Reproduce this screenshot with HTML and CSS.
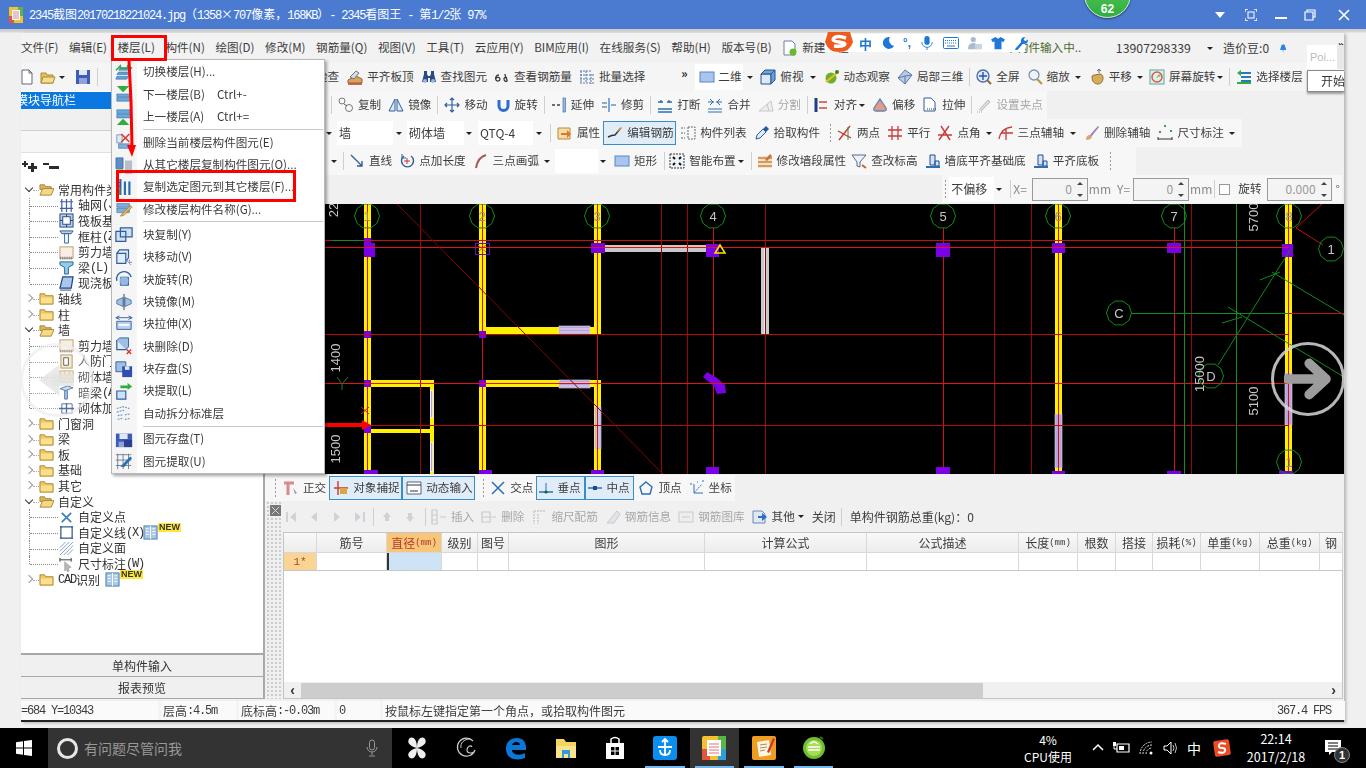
FILE: index.html
```html
<!DOCTYPE html>
<html lang="zh-CN">
<head>
<meta charset="utf-8">
<title>2345看图王</title>
<link rel="stylesheet" href="styles.css">
</head>
<body>
<svg class="defs" aria-hidden="true">
<defs>
<symbol id="doc" viewBox="0 0 16 16"><path d="M3 1h7l3 3v11H3z" fill="#fff" stroke="#667"/><path d="M10 1v3h3" fill="none" stroke="#667"/></symbol>
<symbol id="docg" viewBox="0 0 16 16"><path d="M2 1h8l3 3v11H2z" fill="#fff" stroke="#6a7fa8"/><circle cx="11" cy="12" r="3.5" fill="#6ab82c"/></symbol>
<symbol id="open" viewBox="0 0 16 16"><path d="M1 4h5l1 2h6v8H1z" fill="#e8c05a" stroke="#a98a3a"/><path d="M3 8h12l-2 6H1z" fill="#f6dc8c" stroke="#a98a3a"/></symbol>
<symbol id="save" viewBox="0 0 16 16"><path d="M1 1h14v14H1z" fill="#3d5cb8"/><path d="M4 1h8v5H4z" fill="#dfe6f5"/><path d="M4 9h8v6H4z" fill="#8fa3d8"/></symbol>
<symbol id="flat" viewBox="0 0 16 16"><path d="M1 11l8-4 6 3v4H1z" fill="#d9a55b" stroke="#8a6a34"/><path d="M3 8l6-6 3 2-5 6z" fill="#d8dde5" stroke="#678"/><path d="M1 15h14" stroke="#c33" stroke-width="1.5"/></symbol>
<symbol id="bino" viewBox="0 0 16 16"><path d="M3 2h3v3l1 2h2l1-2V2h3v3l2 8H9V9H7v4H1l2-8z" fill="#2a4a84"/><circle cx="4" cy="12" r="2" fill="#9fb7e0"/><circle cx="12" cy="12" r="2" fill="#9fb7e0"/></symbol>
<symbol id="look" viewBox="0 0 16 16"><path d="M5 6C2 6 1 9 2 11s4 1 4-1-3-2-4-1M11 5c0 4 3 6 2 7s-3 0-3-2 2-2 3-1" fill="none" stroke="#333" stroke-width="1.3"/></symbol>
<symbol id="batch" viewBox="0 0 16 16"><path d="M1 2h11M1 6h14M1 10h14M1 14h14M2 2v12M7 2v12M12 5v10" stroke="#5577aa" stroke-dasharray="2 1" fill="none"/></symbol>
<symbol id="r2d" viewBox="0 0 16 16"><rect x="1" y="3" width="14" height="10" fill="#a9c5ef" stroke="#5a85c6"/></symbol>
<symbol id="cube" viewBox="0 0 16 16"><path d="M1 5h10v10H1z" fill="#dbe9f8" stroke="#26548c"/><path d="M1 5l4-4h10l-4 4zM11 5l4-4v10l-4 4z" fill="#6ea2da" stroke="#26548c"/></symbol>
<symbol id="orbit" viewBox="0 0 16 16"><circle cx="7" cy="9" r="5.5" fill="#6fae2e"/><path d="M2 13L14 3" stroke="#e6c028" stroke-width="2"/><circle cx="13" cy="3" r="2" fill="#3f7d1d"/></symbol>
<symbol id="p3d" viewBox="0 0 16 16"><path d="M8 1l7 5-7 9-7-6z" fill="#b9cbe4" stroke="#5a7ba6"/><path d="M1 9l7-2 7-1M8 7v8" stroke="#5a7ba6" fill="none"/></symbol>
<symbol id="zf" viewBox="0 0 16 16"><circle cx="7" cy="7" r="6" fill="#dfeafa" stroke="#4c6ea6" stroke-width="1.4"/><path d="M7 3v8M3 7h8" stroke="#2456a6" stroke-width="1.4"/><path d="M11 11l4 4" stroke="#8a6a3a" stroke-width="2"/></symbol>
<symbol id="zm" viewBox="0 0 16 16"><circle cx="7" cy="6" r="5" fill="#eef3fa" stroke="#7c92b4" stroke-width="1.3"/><path d="M10 10l5 5" stroke="#b79a3a" stroke-width="2.2"/></symbol>
<symbol id="pan" viewBox="0 0 16 16"><path d="M3 8c0-2 2-2 3-2l5-1c2 0 3 2 3 4s-1 6-5 6-6-3-6-7z" fill="#d9ad55" stroke="#8a6d2f"/><path d="M10 4V1M8 2l2-2 2 2" stroke="#667" fill="none"/></symbol>
<symbol id="rs" viewBox="0 0 16 16"><rect x="1" y="1" width="14" height="14" fill="#dff0ea" stroke="#5aa"/><circle cx="8" cy="8" r="5" fill="none" stroke="#d95a4a" stroke-width="1.5"/><path d="M7 9l3-4 2 2z" fill="#8bbf3a"/></symbol>
<symbol id="lay" viewBox="0 0 16 16"><path d="M5 4h10M5 8h10M5 12h10" stroke="#2a7ab8" stroke-width="2"/><path d="M5 1L1 4l4 3z" fill="#2fae3c"/><path d="M1 14h14" stroke="#2fae3c" stroke-width="2"/></symbol>
<symbol id="dup" viewBox="0 0 16 16"><circle cx="4" cy="4" r="3" fill="none" stroke="#777"/><circle cx="11" cy="11" r="3.5" fill="none" stroke="#777"/><path d="M6 7l3 2" stroke="#2a6fb0"/></symbol>
<symbol id="mir" viewBox="0 0 16 16"><path d="M7 2v12H1zM9 2v12h6z" fill="#dfe9f6" stroke="#2f5f9e"/></symbol>
<symbol id="mov" viewBox="0 0 16 16"><path d="M8 1v14M1 8h14M6 3l2-2 2 2M6 13l2 2 2-2M3 6L1 8l2 2M13 6l2 2-2 2" stroke="#2f5f9e" fill="none" stroke-width="1.2"/></symbol>
<symbol id="rot" viewBox="0 0 16 16"><path d="M4 3v6a4.500 4.500 0 0 0 9 0V3" fill="none" stroke="#2a6fd0" stroke-width="3"/></symbol>
<symbol id="ext" viewBox="0 0 16 16"><path d="M1 8h3M6 8h3" stroke="#345" stroke-width="1.5"/><rect x="12" y="1" width="2.5" height="14" fill="#9dbbe0" stroke="#2f5f9e" stroke-width=".6"/></symbol>
<symbol id="trm" viewBox="0 0 16 16"><path d="M1 6h5M1 10h5M10 8h5" stroke="#2f5f9e" stroke-width="1.2"/><rect x="7" y="1" width="2" height="14" fill="#7ea6d8"/></symbol>
<symbol id="brk" viewBox="0 0 16 16"><path d="M1 12h14M1 15h14M4 3v3M12 3v3M1 5h5M10 5h5" stroke="#2f6fae" stroke-width="1.3"/></symbol>
<symbol id="mrg" viewBox="0 0 16 16"><path d="M1 12h14M1 15h14M1 5h6M9 5h6M3 2l3 3-3 3M13 2l-3 3 3 3" stroke="#2f6fae" fill="none"/></symbol>
<symbol id="spl" viewBox="0 0 16 16"><path d="M1 14h14L13 4 1 14M9 7l2 7" stroke="#c4c8cc" fill="#eee"/></symbol>
<symbol id="ali" viewBox="0 0 16 16"><path d="M2 1v14" stroke="#1d3f86" stroke-width="3"/><path d="M5 5h8M5 11h8" stroke="#d04a3a" stroke-width="1.5"/></symbol>
<symbol id="off" viewBox="0 0 16 16"><path d="M8 2l6 9q1 3-2 3H4q-3 0-2-3z" fill="#e49a90" stroke="#5a8aa8" stroke-width="1.3"/></symbol>
<symbol id="str" viewBox="0 0 16 16"><path d="M2 1h7l4 4v9H2z" fill="#fff" stroke="#2f5f9e"/><path d="M5 12h9" stroke="#333" stroke-dasharray="1 1"/></symbol>
<symbol id="grp" viewBox="0 0 16 16"><path d="M3 13L12 3l2 2-9 9" fill="#ddd" stroke="#bbb"/><path d="M1 15h5" stroke="#aaa" stroke-dasharray="1 1"/></symbol>
<symbol id="prop" viewBox="0 0 16 16"><path d="M1 3h12v11H1z" fill="#f4dda8" stroke="#b98a3c"/><path d="M4 8h6V5l4 4-4 4v-3H4z" fill="#d97a2a"/></symbol>
<symbol id="edit" viewBox="0 0 16 16"><path d="M1 12q4-2 7-2l5-6" stroke="#333" fill="none" stroke-width="1.4"/><path d="M10 6l4-4 1 1-4 4z" fill="#c58a3a"/></symbol>
<symbol id="lst" viewBox="0 0 16 16"><path d="M1 3h4M1 8h4M1 13h4M8 2h7v12H8z" stroke="#667" stroke-dasharray="2 1" fill="none"/></symbol>
<symbol id="pick" viewBox="0 0 16 16"><path d="M2 14l1-4 6-6 3 3-6 6z" fill="#dfeafa" stroke="#2a58a0"/><path d="M9 4l3-3 3 3-3 3" fill="#2a58a0"/></symbol>
<symbol id="two" viewBox="0 0 16 16"><path d="M2 15L13 1M1 6l13 7" stroke="#c83a2a" stroke-width="1.4"/><path d="M11 2v13" stroke="#4a8a4a"/></symbol>
<symbol id="par" viewBox="0 0 16 16"><path d="M5 1v14M11 1v14M1 5h14M1 11h14" stroke="#c83a3a" stroke-width="1.3"/></symbol>
<symbol id="ang" viewBox="0 0 16 16"><path d="M2 15L12 1M4 1l9 14M1 10h14" stroke="#c83a3a" stroke-width="1.4"/></symbol>
<symbol id="tpa" viewBox="0 0 16 16"><path d="M1 14Q3 3 14 2M8 3v12M3 8h12" stroke="#c83a3a" fill="none" stroke-width="1.3"/></symbol>
<symbol id="dax" viewBox="0 0 16 16"><path d="M6 10l8-9 1 1-8 10z" fill="#9a7ac0"/><path d="M2 15q0-5 4-5l2 2q-1 3-6 3z" fill="#d8a868"/></symbol>
<symbol id="dm" viewBox="0 0 16 16"><path d="M1 12v3M15 12v3M1 14h14" stroke="#333"/><path d="M7 1h2M13 6h2M2 7h2" stroke="#4a9a4a" stroke-width="2"/></symbol>
<symbol id="ln" viewBox="0 0 16 16"><path d="M2 2l11 11M13 8v5H8" stroke="#2f5f9e" fill="none" stroke-width="1.4"/></symbol>
<symbol id="pl" viewBox="0 0 16 16"><path d="M5 3a6 6 0 1 0 7 0" stroke="#2f5f9e" fill="none" stroke-width="1.4"/><path d="M8 5v6M5 8h6" stroke="#c33"/><path d="M3 1v4h4" stroke="#2f5f9e" fill="none"/></symbol>
<symbol id="arc" viewBox="0 0 16 16"><path d="M3 15Q5 4 13 2" stroke="#a55" fill="none" stroke-width="2"/></symbol>
<symbol id="sm" viewBox="0 0 16 16"><rect x="1" y="1" width="14" height="14" fill="#eef3fa" stroke="#333" stroke-dasharray="2 1"/><path d="M4 4l2 2M12 4l-2 2M4 12l2-2M12 12l-2-2" stroke="#111" stroke-width="2"/></symbol>
<symbol id="seg" viewBox="0 0 16 16"><path d="M1 5h14M1 9h14M1 13h14" stroke="#d89a58" stroke-width="2.6"/><path d="M8 7l5-6 2 2-5 5z" fill="#c8733a"/></symbol>
<symbol id="elv" viewBox="0 0 16 16"><path d="M1 2h14L9 9v5l-3-1V9z" fill="#eef2f7" stroke="#536d92"/><path d="M11 12l4 3" stroke="#c85a2a" stroke-width="1.6"/></symbol>
<symbol id="wb" viewBox="0 0 16 16"><path d="M5 2h5v10H5zM10 8h4v5h-4z" fill="#d5e3f5" stroke="#1f4e96"/><path d="M1 13h14v2H1z" fill="#2f6fae"/></symbol>
<symbol id="ort" viewBox="0 0 16 16"><path d="M1 3h10M5 3v12" stroke="#d98a8a" stroke-width="3"/><path d="M10 8l4 5-2 1z" fill="#99a"/></symbol>
<symbol id="snp" viewBox="0 0 16 16"><path d="M5 1v14M1 8h14" stroke="#c83a2a" stroke-width="1.4"/><path d="M7 8h7v6H7z" fill="#d8a83c"/></symbol>
<symbol id="dyn" viewBox="0 0 16 16"><path d="M1 2h14v12H1z" fill="#fff" stroke="#567"/><path d="M1 5h14M4 11h8" stroke="#333"/></symbol>
<symbol id="xpt" viewBox="0 0 16 16"><path d="M2 2l12 12M14 2L2 14" stroke="#2a6fb8" stroke-width="1.5"/></symbol>
<symbol id="ppt" viewBox="0 0 16 16"><path d="M1 12h14" stroke="#2a6fb8" stroke-width="1.5"/><path d="M8 3v10" stroke="#2a6fb8"/><circle cx="8" cy="12" r="1.6" fill="#163"/></symbol>
<symbol id="mpt" viewBox="0 0 16 16"><path d="M1 8h14" stroke="#2a6fb8" stroke-width="1.5"/><rect x="6" y="6" width="4" height="4" fill="#1c4a84"/></symbol>
<symbol id="vpt" viewBox="0 0 16 16"><path d="M8 2l6 5-2 7H4L2 7z" fill="none" stroke="#2a6fb8" stroke-width="1.4"/></symbol>
<symbol id="cpt" viewBox="0 0 16 16"><path d="M5 4v9h9" stroke="#2a6fb8" fill="none"/><path d="M5 13L13 4M1 4h2M13 1h2M8 2h1" stroke="#2a6fb8" stroke-dasharray="2 1"/></symbol>
<symbol id="gfst" viewBox="0 0 16 16"><path d="M3 3h2v10H3zM13 3v10L7 8z" fill="#cfd3d8"/></symbol>
<symbol id="gprv" viewBox="0 0 16 16"><path d="M11 3v10L5 8z" fill="#cfd3d8"/></symbol>
<symbol id="gnxt" viewBox="0 0 16 16"><path d="M5 3v10l6-5z" fill="#cfd3d8"/></symbol>
<symbol id="glst" viewBox="0 0 16 16"><path d="M3 3v10l6-5zM11 3h2v10h-2z" fill="#cfd3d8"/></symbol>
<symbol id="gup" viewBox="0 0 16 16"><path d="M8 3l4 5h-2v4H6V8H4z" fill="#cfd3d8"/></symbol>
<symbol id="gdn" viewBox="0 0 16 16"><path d="M8 13l4-5h-2V4H6v4H4z" fill="#cfd3d8"/></symbol>
<symbol id="gins" viewBox="0 0 16 16"><path d="M1 1h5v14H1zM1 6h5M1 11h5M9 8h6" stroke="#c6c9cd" fill="none" stroke-width="1.2"/></symbol>
<symbol id="gdel" viewBox="0 0 16 16"><path d="M1 3h8v10H1zM1 8h8M10 8h5" stroke="#c6c9cd" fill="none" stroke-width="1.2"/></symbol>
<symbol id="gscl" viewBox="0 0 16 16"><path d="M3 2v13M3 2h12M7 5v10" stroke="#c6c9cd" fill="none" stroke-dasharray="2 1" stroke-width="1.4"/></symbol>
<symbol id="ginf" viewBox="0 0 16 16"><path d="M2 14L12 2l3 3-6 9z" fill="#e1e3e6" stroke="#c6c9cd"/></symbol>
<symbol id="glib" viewBox="0 0 16 16"><rect x="1" y="3" width="14" height="10" fill="#eee" stroke="#c6c9cd"/><path d="M4 8h8" stroke="#c6c9cd"/></symbol>
<symbol id="goth" viewBox="0 0 16 16"><path d="M1 2h9l3 3v9H1z" fill="#dfe8f4" stroke="#6a8ab4"/><path d="M6 7h4V4l5 4-5 4V9H6z" fill="#2a6fd0"/></symbol>
<symbol id="m1" viewBox="0 0 20 20"><path d="M6 5h13l-2 3H4zM4 10h13l-2 3H2zM2 15h13l-2 3H1z" fill="#5fa0d8" stroke="#2a6a9e" stroke-width=".6"/><path d="M1 8l5-5v3h8V2" fill="none" stroke="#2fae3c" stroke-width="1.6"/></symbol>
<symbol id="m2" viewBox="0 0 20 20"><path d="M2 1h14l-7 7z" fill="#2fae3c"/><path d="M2 10h15v3H2zM2 14h15v4H2z" fill="#6aa8dc" stroke="#2a6a9e" stroke-width=".6"/></symbol>
<symbol id="m3" viewBox="0 0 20 20"><path d="M2 2h15v4H2zM2 7h15v4H2z" fill="#6aa8dc" stroke="#2a6a9e" stroke-width=".6"/><path d="M2 19h14l-7-7z" fill="#2fae3c"/></symbol>
<symbol id="m4" viewBox="0 0 20 20"><path d="M2 2h6v9H2z" fill="#dfe9f6" stroke="#7a96b8"/><path d="M4 12h15v5H4z" fill="#7eafdf" stroke="#2a6a9e" stroke-width=".6"/><path d="M7 1l9 9M16 1l-9 9" stroke="#d8342a" stroke-width="1.6"/></symbol>
<symbol id="m5" viewBox="0 0 20 20"><path d="M1 2h8v12H1z" fill="#5f8cc8" stroke="#2a4e8a" stroke-width=".6"/><path d="M11 5h8v15h-8z" fill="#b8bec6"/><path d="M2 15h7v4H2z" fill="#2fae3c"/></symbol>
<symbol id="m6" viewBox="0 0 20 20"><path d="M6 1v18M11 4v15M16 4v15" stroke="#2a6ab0" stroke-width="2.4"/><path d="M1 5h5M1 9h5" stroke="#2a4a8a"/><path d="M1 13h5v5H1z" fill="#2fae3c"/></symbol>
<symbol id="m7" viewBox="0 0 20 20"><path d="M2 4h14v4H2zM2 9h14v5H2z" fill="#7eafdf" stroke="#2a6a9e" stroke-width=".6"/><path d="M6 18l2-3 9-9 2 2-9 9z" fill="#e2b254" stroke="#8a6a2a" stroke-width=".6"/></symbol>
<symbol id="b1" viewBox="0 0 20 20"><path d="M1 6h11v11H1zM6 2h13v10H6z" fill="#cfe0f3" stroke="#2f5f9e" stroke-width="1.4"/></symbol>
<symbol id="b2" viewBox="0 0 20 20"><path d="M2 6h10v11H2zM2 6l3-4h10v9l-3 4" fill="#dfeafa" stroke="#2f5f9e" stroke-width="1.3"/><path d="M13 14l5 5M16 13v3h3" stroke="#889" fill="none"/></symbol>
<symbol id="b3" viewBox="0 0 20 20"><path d="M6 8h9v9H6z" fill="#7ea6d8" stroke="#2f5f9e"/><path d="M2 12a8 8 0 0 1 16-4" fill="none" stroke="#2f5f9e" stroke-width="1.5"/><circle cx="10" cy="12" r="5" fill="#9fbfe4" opacity=".7"/></symbol>
<symbol id="b4" viewBox="0 0 20 20"><path d="M9 5v10L2 12V8zM11 5v10l7-3V8z" fill="#9fbfe4" stroke="#2f5f9e" stroke-width=".8"/><path d="M10 1v18" stroke="#333"/></symbol>
<symbol id="b5" viewBox="0 0 20 20"><path d="M1 3h18M5 1L1 3l4 2M15 1l4 2-4 2" stroke="#2f5f9e" fill="none"/><path d="M2 7h16v9H2z" fill="#b8d0ec" stroke="#2f5f9e"/><path d="M4 11h12" stroke="#fff" stroke-width="2"/></symbol>
<symbol id="b6" viewBox="0 0 20 20"><path d="M2 4h10v10H2z" fill="#dfeafa" stroke="#2f5f9e" stroke-width="1.4"/><path d="M2 4l3-3h10v10l-3 3" fill="#9fbfe4" stroke="#2f5f9e"/><path d="M13 14l5 5M18 14l-5 5" stroke="#d8342a" stroke-width="1.5"/></symbol>
<symbol id="b7" viewBox="0 0 20 20"><path d="M1 2h11v11H1z" fill="#9fbfe4" stroke="#2f5f9e"/><path d="M8 7h11v12H8z" fill="#2f4eb0"/><path d="M11 7h5v4h-5z" fill="#dfe6f5"/></symbol>
<symbol id="b8" viewBox="0 0 20 20"><path d="M2 10h10v9H2z" fill="#cfe0f3" stroke="#2f5f9e" stroke-width="1.3"/><path d="M6 7V4h8V1l5 4-5 4V7h-6" fill="#2fae3c"/></symbol>
<symbol id="b9" viewBox="0 0 20 20"><path d="M2 5l7-2 7 2M2 9l7-2 2 1M11 12l6-1M3 13l6-1M3 17l5-1M11 17l6-1" stroke="#6a94c8" stroke-dasharray="2 1.2" fill="none" stroke-width="1.3"/></symbol>
<symbol id="e1" viewBox="0 0 20 20"><path d="M1 4h18v15H1z" fill="#3d5cb8"/><path d="M5 4h9v6H5z" fill="#dfe6f5"/><path d="M4 13h6v6H4z" fill="#8fa3d8"/><path d="M10 11h9v8h-9z" fill="#30418c"/></symbol>
<symbol id="e2" viewBox="0 0 20 20"><path d="M1 3h17M1 9h17M1 15h17M3 2v17M9 2v17M15 2v17" stroke="#6a7a94" fill="none"/><path d="M6 16L17 5l2 2-9 10z" fill="#2a6fb0"/></symbol>
<symbol id="axs" viewBox="0 0 16 16"><path d="M1 4h14M1 11h14M3 1v14M8 1v14M13 1v14" stroke="#3f5fa8" stroke-width="1.3"/></symbol>
<symbol id="raft" viewBox="0 0 16 16"><rect x="1" y="1" width="14" height="14" fill="#b6cde9" stroke="#24447e"/><rect x="4" y="4" width="8" height="8" fill="#fff" stroke="#24447e"/><path d="M1 8h3M12 8h3M8 1v3M8 12v3" stroke="#24447e"/></symbol>
<symbol id="col" viewBox="0 0 16 16"><path d="M1 2h14l-2 3H3z" fill="#bcd3ec" stroke="#2a5a96"/><path d="M6 5h4v10H6z" fill="#fff" stroke="#2a5a96"/></symbol>
<symbol id="shw" viewBox="0 0 16 16"><rect x="1" y="2" width="14" height="12" fill="#f7efe3" stroke="#c09a70"/><path d="M1 14h14" stroke="#777" stroke-width="3" stroke-dasharray="1 1"/></symbol>
<symbol id="bm" viewBox="0 0 16 16"><path d="M1 2h14v3l-5 3v7H6V8L1 5z" fill="#8fd0e6" stroke="#2a5a96"/></symbol>
<symbol id="slab" viewBox="0 0 16 16"><path d="M4 1h11l-2 12H1z" fill="#a9c8ee" stroke="#24447e" stroke-width="1.3"/><path d="M1 15h12" stroke="#24447e"/></symbol>
<symbol id="rfd" viewBox="0 0 16 16"><rect x="2" y="1" width="12" height="14" fill="#f3e6c8" stroke="#9a7a3a"/><path d="M5 4h5v8H5z" fill="#fff" stroke="#333"/></symbol>
<symbol id="brc" viewBox="0 0 16 16"><rect x="1" y="2" width="14" height="12" fill="#f4e3c6" stroke="#b89a6a"/><path d="M1 6h14M1 10h14M6 2v4M11 2v4M3 6v4M8 6v4M13 6v4M6 10v4M11 10v4" stroke="#c8aa7a" stroke-width=".7"/></symbol>
<symbol id="hb" viewBox="0 0 16 16"><path d="M1 4l8-3 6 2-8 3z" fill="#bcd3ec" stroke="#2a5a96"/><path d="M6 6h3v9H6z" fill="#8fb0d4" stroke="#2a5a96"/></symbol>
<symbol id="brb" viewBox="0 0 16 16"><path d="M3 3h11v10H3z" fill="none" stroke="#24447e"/><path d="M0 8h16M8 2v12" stroke="#24447e" stroke-width="1.4"/></symbol>
<symbol id="cpnt" viewBox="0 0 16 16"><path d="M3 3l10 10M13 3L3 13" stroke="#3f7fc0" stroke-width="1.8"/></symbol>
<symbol id="crec" viewBox="0 0 16 16"><rect x="2" y="2" width="12" height="12" fill="none" stroke="#24447e" stroke-width="1.2"/><path d="M1 1h2v2H1zM13 1h2v2h-2zM1 13h2v2H1zM13 13h2v2h-2z" fill="#3f6fb0"/></symbol>
<symbol id="chat" viewBox="0 0 16 16"><path d="M1 7l6-6M1 11l10-10M1 15L15 1M5 15L15 5M9 15l6-6" stroke="#7f9fc8"/></symbol>
<symbol id="cdim" viewBox="0 0 16 16"><path d="M1 3h12M1 1v4M13 1v4" stroke="#333"/><path d="M6 5l7 6-3 1 1 3-2 1-1-3-2 2z" fill="#b4b8bd" stroke="#8a8e94" stroke-width=".5"/></symbol>
<symbol id="book" viewBox="0 0 16 16"><rect x="1" y="1" width="14" height="14" fill="#a9c8e8" stroke="#4a7aac"/><path d="M8 1v14M3 4h3M3 7h3M3 10h3M10 4h3M10 7h3M10 10h3" stroke="#fff"/></symbol>
<symbol id="fldc" viewBox="0 0 16 16"><path d="M1 3h5l1 2h8v9H1z" fill="#f2c75c" stroke="#a8873a"/><path d="M2 7h12v6H2z" fill="#fbe08d"/></symbol>
<symbol id="fldo" viewBox="0 0 16 16"><path d="M1 3h5l1 2h6v3H1z" fill="#d9b45a" stroke="#a8873a"/><path d="M4 7h12l-3 7H1z" fill="#f6d987" stroke="#a8873a"/></symbol>
</defs>
</svg>

<header class="titlebar">
  <svg class="ttl-logo" viewBox="0 0 14 16"><rect width="14" height="16" fill="#f2c230"/><rect x="0" y="9" width="5" height="7" fill="#e2573a"/><rect x="9" y="0" width="5" height="9" fill="#59b44a"/><rect x="3" y="3" width="8" height="10" fill="#fff"/><path d="M4 5h6M4 7h6M4 9h6M4 11h6" stroke="#c89"/></svg>
  <div class="ttl-text">2345<b>截图</b>20170218221024.jpg<b>（</b>1358<b>×</b>707<b>像素，</b>168KB<b>）</b>- 2345<b>看图王</b> - <b>第</b>1/2<b>张</b> 97%</div>
  <div class="win-btns">
    <span class="wb-drop"></span>
    <svg class="wb wb-full" viewBox="0 0 12 12"><path d="M0 3V0h3M9 0h3v3M12 9v3H9M3 12H0V9" fill="none" stroke="#fff" stroke-width="1.4"/><rect x="3" y="3" width="6" height="6" fill="none" stroke="#fff"/></svg>
    <svg class="wb wb-min" viewBox="0 0 12 12"><path d="M0 9h12" stroke="#fff" stroke-width="2"/></svg>
    <svg class="wb wb-res" viewBox="0 0 12 12"><path d="M3 3V1h8v7H9M1 3h8v8H1z" fill="none" stroke="#fff" stroke-width="1.2"/></svg>
    <svg class="wb wb-close" viewBox="0 0 12 12"><path d="M1 1l10 10M11 1L1 11" stroke="#fff" stroke-width="1.6"/></svg>
  </div>
</header>

<main class="stage">
  <div class="app">
    <nav class="menubar">
      <span>文件(F)</span><span>编辑(E)</span><span>楼层(L)</span><span>构件(N)</span><span>绘图(D)</span><span>修改(M)</span><span>钢筋量(Q)</span><span>视图(V)</span><span>工具(T)</span><span>云应用(Y)</span><span>BIM应用(I)</span><span>在线服务(S)</span><span>帮助(H)</span><span>版本号(B)</span>
      <span class="tool tnew"><svg class="i"><use href="#docg"/></svg>新建工程</span>
      <span class="inputting">单构件输入中..</span>
      <span class="phone">13907298339</span><i class="caret phone-c"></i>
      <span class="beans">造价豆:0</span>
      <svg class="bell" viewBox="0 0 12 14"><path d="M6 0q4 0 4 5l2 6H0l2-6q0-5 4-5zM4 12h4l-2 2z" fill="#2a86e6"/></svg>
      <span class="more more-top">»</span>
    </nav>

    <div class="row row1"><div class="band band1">
      <svg class="i i-a"><use href="#doc"/></svg><svg class="i i-b"><use href="#open"/></svg><i class="caret c-b"></i><svg class="i i-c"><use href="#save"/></svg><span class="sep s-a"></span>
      <span class="hidden-txt">检查</span>
      <span class="tool m8"><svg class="i"><use href="#flat"/></svg>平齐板顶</span>
      <span class="tool"><svg class="i"><use href="#bino"/></svg>查找图元</span>
      <span class="tool"><svg class="i"><use href="#look"/></svg>查看钢筋量</span>
      <span class="tool"><svg class="i"><use href="#batch"/></svg>批量选择</span>
      <span class="more more-1">»</span>
      <span class="combo c2d"><svg class="i"><use href="#r2d"/></svg>二维</span><i class="caret c-2d"></i>
      <span class="tool m4"><svg class="i"><use href="#cube"/></svg>俯视</span><i class="caret m6"></i>
      <span class="tool m8"><svg class="i"><use href="#orbit"/></svg>动态观察</span>
      <span class="tool"><svg class="i"><use href="#p3d"/></svg>局部三维</span><span class="sep"></span>
      <span class="tool"><svg class="i"><use href="#zf"/></svg>全屏</span>
      <span class="tool"><svg class="i"><use href="#zm"/></svg>缩放</span><i class="caret m5"></i>
      <span class="tool m8"><svg class="i"><use href="#pan"/></svg>平移</span><i class="caret m5"></i>
      <span class="tool m6"><svg class="i"><use href="#rs"/></svg>屏幕旋转</span><i class="caret m2"></i><span class="sep"></span>
      <span class="tool"><svg class="i"><use href="#lay"/></svg>选择楼层</span>
    </div></div>

    <div class="body">
      <aside class="side">
        <div class="side-title">模块导航栏</div>
        <div class="side-sub"></div>
        <div class="side-sub2"></div>
        <div class="side-tree">
          <div class="tree-tools"><svg class="tt" viewBox="0 0 16 12"><path d="M0 3h6v2H0zM2 1h2v6H2zM6 6h9v3H6zM9 3h3v9H9z" fill="#2b2b2b"/></svg><svg class="tt" viewBox="0 0 16 12"><path d="M0 3h6v2H0zM6 6h10v3H6z" fill="#2b2b2b"/></svg></div>
          <ul class="tree">
            <li class="f open"><svg class="i16"><use href="#fldo"/></svg>常用构件类型</li>
            <li class="l"><svg class="i16"><use href="#axs"/></svg>轴网<span class="mn">(J)</span></li>
            <li class="l"><svg class="i16"><use href="#raft"/></svg>筏板基础<span class="mn">(M)</span></li>
            <li class="l"><svg class="i16"><use href="#col"/></svg>框柱<span class="mn">(Z)</span></li>
            <li class="l"><svg class="i16"><use href="#shw"/></svg>剪力墙<span class="mn">(Q)</span></li>
            <li class="l"><svg class="i16"><use href="#bm"/></svg>梁<span class="mn">(L)</span></li>
            <li class="l end"><svg class="i16"><use href="#slab"/></svg>现浇板<span class="mn">(B)</span></li>
            <li class="f"><svg class="i16"><use href="#fldc"/></svg>轴线</li>
            <li class="f"><svg class="i16"><use href="#fldc"/></svg>柱</li>
            <li class="f open"><svg class="i16"><use href="#fldo"/></svg>墙</li>
            <li class="l"><svg class="i16"><use href="#shw"/></svg>剪力墙<span class="mn">(Q)</span></li>
            <li class="l"><svg class="i16"><use href="#rfd"/></svg>人防门框墙<span class="mn">(RF)</span></li>
            <li class="l"><svg class="i16"><use href="#brc"/></svg>砌体墙<span class="mn">(Q)</span></li>
            <li class="l"><svg class="i16"><use href="#hb"/></svg>暗梁<span class="mn">(A)</span></li>
            <li class="l end"><svg class="i16"><use href="#brb"/></svg>砌体加筋<span class="mn">(Y)</span></li>
            <li class="f"><svg class="i16"><use href="#fldc"/></svg>门窗洞</li>
            <li class="f"><svg class="i16"><use href="#fldc"/></svg>梁</li>
            <li class="f"><svg class="i16"><use href="#fldc"/></svg>板</li>
            <li class="f"><svg class="i16"><use href="#fldc"/></svg>基础</li>
            <li class="f"><svg class="i16"><use href="#fldc"/></svg>其它</li>
            <li class="f open"><svg class="i16"><use href="#fldo"/></svg>自定义</li>
            <li class="l"><svg class="i16"><use href="#cpnt"/></svg>自定义点</li>
            <li class="l"><svg class="i16"><use href="#crec"/></svg>自定义线<span class="mn">(X)</span><svg class="i16 bk"><use href="#book"/></svg><em class="newtag">NEW</em></li>
            <li class="l"><svg class="i16"><use href="#chat"/></svg>自定义面</li>
            <li class="l end"><svg class="i16"><use href="#cdim"/></svg>尺寸标注<span class="mn">(W)</span></li>
            <li class="f"><svg class="i16"><use href="#fldc"/></svg><span class="mn">CAD</span>识别<svg class="i16 bk bk2"><use href="#book"/></svg><em class="newtag">NEW</em></li>
          </ul>
        </div>
        <div class="side-tab">单构件输入</div>
        <div class="side-tab">报表预览</div>
      </aside>

      <section class="work">
        <div class="row"><div class="band r2">
          <span class="sep s331"></span>
          <span class="tool"><svg class="i"><use href="#dup"/></svg>复制</span>
          <span class="tool"><svg class="i"><use href="#mir"/></svg>镜像</span><span class="sep"></span>
          <span class="tool"><svg class="i"><use href="#mov"/></svg>移动</span>
          <span class="tool"><svg class="i"><use href="#rot"/></svg>旋转</span><span class="sep"></span>
          <span class="tool"><svg class="i"><use href="#ext"/></svg>延伸</span>
          <span class="tool"><svg class="i"><use href="#trm"/></svg>修剪</span><span class="sep"></span>
          <span class="tool"><svg class="i"><use href="#brk"/></svg>打断</span>
          <span class="tool"><svg class="i"><use href="#mrg"/></svg>合并</span>
          <span class="tool off"><svg class="i"><use href="#spl"/></svg>分割</span><span class="sep"></span>
          <span class="tool"><svg class="i"><use href="#ali"/></svg>对齐</span><i class="caret m2"></i>
          <span class="tool"><svg class="i"><use href="#off"/></svg>偏移</span>
          <span class="tool"><svg class="i"><use href="#str"/></svg>拉伸</span><span class="sep"></span>
          <span class="tool off m4"><svg class="i"><use href="#grp"/></svg>设置夹点</span>
        </div></div>

        <div class="row"><div class="band r3">
          <i class="caret c326"></i><span class="field f56">墙</span><i class="caret m3"></i><span class="field f57">砌体墙</span><i class="caret m2"></i><span class="field f55">QTQ-4</span><i class="caret m3"></i><span class="sep m8"></span>
          <span class="tool"><svg class="i"><use href="#prop"/></svg>属性</span>
          <span class="tool on m3 b-edit"><svg class="i"><use href="#edit"/></svg>编辑钢筋</span>
          <span class="tool m4"><svg class="i"><use href="#lst"/></svg>构件列表</span>
          <span class="tool"><svg class="i"><use href="#pick"/></svg>拾取构件</span>
          <span class="grip m9"></span>
          <span class="tool m5"><svg class="i"><use href="#two"/></svg>两点</span>
          <span class="tool"><svg class="i"><use href="#par"/></svg>平行</span>
          <span class="tool"><svg class="i"><use href="#ang"/></svg>点角</span><i class="caret m5"></i>
          <span class="tool m6"><svg class="i"><use href="#tpa"/></svg>三点辅轴</span><i class="caret m6"></i>
          <span class="tool m8"><svg class="i"><use href="#dax"/></svg>删除辅轴</span>
          <span class="tool"><svg class="i"><use href="#dm"/></svg>尺寸标注</span><i class="caret m5 c-end"></i>
        </div></div>

        <div class="row"><div class="band r4">
          <i class="caret c331"></i><span class="sep"></span>
          <span class="tool m5"><svg class="i"><use href="#ln"/></svg>直线</span>
          <span class="tool"><svg class="i"><use href="#pl"/></svg>点加长度</span>
          <span class="tool"><svg class="i"><use href="#arc"/></svg>三点画弧</span><i class="caret m5"></i>
          <span class="field f43"></span><i class="caret m2"></i>
          <span class="tool m8"><svg class="i"><use href="#r2d"/></svg>矩形</span><span class="sep m7"></span>
          <span class="tool m4"><svg class="i"><use href="#sm"/></svg>智能布置</span><i class="caret m2"></i><span class="sep m7"></span>
          <span class="tool m5"><svg class="i"><use href="#seg"/></svg>修改墙段属性</span>
          <span class="tool m5"><svg class="i"><use href="#elv"/></svg>查改标高</span>
          <span class="tool"><svg class="i"><use href="#wb"/></svg>墙底平齐基础底</span>
          <span class="tool"><svg class="i"><use href="#wb"/></svg>平齐底板</span>
          <span class="grip m10 g-end"></span>
        </div></div>

        <div class="row row5"><div class="band r5">
          <span class="grip"></span><span class="field f45">不偏移</span><i class="caret m2"></i><span class="sep m8"></span>
          <span class="lbl m2">X=</span><span class="num n56 m5">0<i class="spin"></i></span><span class="lbl m1">mm</span>
          <span class="lbl m6">Y=</span><span class="num n56 m3">0<i class="spin"></i></span><span class="lbl m1">mm</span>
          <span class="sep m2"></span><span class="chk"></span>
          <span class="rlabel">旋转</span><span class="num n65">0.000<i class="spin"></i></span><span class="deg">°</span>
        </div></div>

        <div class="canvas-wrap">
          <span class="cv-edge"></span>
          <svg class="cad" viewBox="272 204 1072 270" aria-label="CAD 图">
            <defs><polygon id="oct" points="12.5,0 10,7.3 3.9,11.9 -3.9,11.9 -10,7.3 -12.5,0 -10,-7.3 -3.9,-11.9 3.9,-11.9 10,-7.3" fill="none" stroke="#128a1c"/></defs>
            <rect x="272" y="204" width="1072" height="270" fill="#000"/>
            <g fill="#fff000">
              <rect x="364" y="204" width="7" height="270"/><rect x="479" y="204" width="7" height="130"/><rect x="479" y="383" width="7" height="91"/>
              <rect x="594" y="204" width="7" height="130"/><rect x="594" y="380" width="7" height="94"/><rect x="1055" y="204" width="7" height="270"/><rect x="1285" y="204" width="7" height="270"/>
              <rect x="486" y="327" width="108" height="7"/><rect x="486" y="380" width="115" height="7"/><rect x="371" y="380" width="63" height="7"/><rect x="371" y="429" width="62" height="4"/><rect x="430" y="387" width="4" height="87"/>
            </g>
            <g fill="#c8c8c8"><rect x="605" y="245" width="102" height="7"/><rect x="761" y="247" width="8" height="87"/><rect x="764" y="247" width="2" height="87" fill="#eee"/></g>
            <g fill="#f4f0fa"><rect x="430" y="390" width="3.500" height="28"/><rect x="430" y="442" width="3.500" height="30"/></g>
            <path d="M431.700 391v26M431.700 443v28" stroke="#a58ad8"/>
            <g fill="#b9a2dd" stroke="#ddd" stroke-width=".6"><rect x="559" y="326" width="31" height="8"/><rect x="559" y="380" width="31" height="8"/><rect x="595" y="407" width="6" height="42"/><rect x="1055" y="414" width="7" height="54"/><rect x="1285" y="373" width="7" height="52"/></g>
            <g stroke="#eee" stroke-width=".8"><path d="M560 329h30M560 332h30M560 383h30M560 386h30M597 408v40M599 408v40"/></g>
            <g stroke="#d41212" stroke-width="1"><path d="M367.500 204v130M367.500 334v140M482.500 204v270M597.500 204v270M1058.500 204v270M1288.500 204v270M713.500 228v246M943.500 228v246M1174.500 228v246"/></g>
            <g stroke="#960808" stroke-width="1"><path d="M420.500 204v270M661.500 204v270M687.500 204v270M765.500 204v270M994.500 204v270M1031.500 204v270M1191.500 204v270"/></g>
            <g fill="#7a00e6">
              <rect x="364" y="238" width="7" height="6"/><rect x="364" y="243" width="11" height="14"/><rect x="591" y="243" width="14" height="10"/><rect x="706" y="244" width="13" height="13"/><rect x="936" y="243" width="14" height="14"/><rect x="1052" y="243" width="13" height="10"/><rect x="1167" y="243" width="14" height="10"/><rect x="1282" y="244" width="11" height="13"/>
              <rect x="364" y="331" width="7" height="7"/><rect x="479" y="331" width="7" height="7"/><rect x="364" y="380" width="7" height="7"/><rect x="479" y="380" width="7" height="7"/><rect x="364" y="426" width="7" height="7"/>
              <rect x="364" y="470" width="14" height="4"/><rect x="479" y="470" width="13" height="4"/><rect x="591" y="470" width="13" height="4"/><rect x="706" y="467" width="13" height="7"/><rect x="936" y="467" width="14" height="7"/><rect x="1052" y="471" width="13" height="3"/><rect x="1167" y="471" width="14" height="3"/><rect x="1279" y="471" width="14" height="3"/>
              <path d="M703 377l4-5 10 6 8 7 1 8-9 1-3-8z"/>
            </g>
            <rect x="475.500" y="243.500" width="14" height="11" fill="none" stroke="#5a10d0"/><path d="M478 245l8 7M486 245l-8 7" stroke="#c8642a"/>
            <path d="M272 240.500h1010" stroke="#c41010"/>
            <path d="M272 247.500h1017M272 383.500h1017" stroke="#e01414"/>
            <path d="M272 334.500h1017M272 425.500h1017" stroke="#b80c0c"/>
            <path d="M397 204L663 474" stroke="#7e0606"/>
            <path d="M720 245l-5 8h10z" fill="none" stroke="#ffe600" stroke-width="1.5"/>
            <g stroke="#128a1c" fill="none">
              <path d="M1184.500 204v270M1236.500 204v270M1131 313.500h158M1218 365L1290 250M1228 307L1344 377M1272 272L1344 315M1222 323l20-6M1260 280l20-8M337 377l5 7 6-7M342 384v6M332 240.500h32"/>
            </g>
            <path d="M1289 313.500h55M1296 228l27 17M1322 204l-26 24" stroke="#c01010" fill="none"/>
            <path d="M361 407l8 7M369 407l-8 7" stroke="#c02020"/>
            <g><use href="#oct" x="367" y="216"/><use href="#oct" x="482" y="216"/><use href="#oct" x="597" y="216"/><use href="#oct" x="713" y="216"/><use href="#oct" x="943" y="216"/><use href="#oct" x="1058" y="216"/><use href="#oct" x="1174" y="216"/><use href="#oct" x="1289" y="216"/><use href="#oct" x="1119" y="313"/><use href="#oct" x="1211" y="376"/><use href="#oct" x="1331" y="249"/><use href="#oct" x="1289" y="462"/></g>
            <g class="cad-t">
              <text class="dk" x="367" y="221">1</text><text class="dk" x="482" y="221">2</text><text class="dk" x="597" y="221">3</text><text x="713" y="221">4</text><text x="943" y="221">5</text><text class="dk" x="1058" y="221">6</text><text x="1174" y="221">7</text><text class="dk" x="1289" y="221">8</text><text x="1119" y="318">C</text><text x="1211" y="381">D</text><text x="1331" y="254">1</text><text class="dk" x="1289" y="467">1</text>
              <text transform="translate(1204 374) rotate(-90)">15000</text><text transform="translate(1258 217) rotate(-90)">5700</text><text transform="translate(1258 401) rotate(-90)">5100</text><text transform="translate(340 358) rotate(-90)">1400</text><text transform="translate(340 449) rotate(-90)">1500</text><text transform="translate(338 210) rotate(-90)">22</text>
            </g>
            <path d="M272 423h90v-3l9 5-9 5v-3h-90z" fill="#f00"/>
          </svg>
        </div>

        <div class="row snap"><div class="band r6">
          <span class="grip g-s"></span>
          <span class="tool m6"><svg class="i"><use href="#ort"/></svg>正交</span>
          <span class="tool on m3 b72"><svg class="i"><use href="#snp"/></svg>对象捕捉</span>
          <span class="tool on m0 b72"><svg class="i"><use href="#dyn"/></svg>动态输入</span>
          <span class="grip m7"></span>
          <span class="tool m5"><svg class="i"><use href="#xpt"/></svg>交点</span>
          <span class="tool on m3 b49"><svg class="i"><use href="#ppt"/></svg>垂点</span>
          <span class="tool on m0 b49"><svg class="i"><use href="#mpt"/></svg>中点</span>
          <span class="tool m4"><svg class="i"><use href="#vpt"/></svg>顶点</span>
          <span class="tool"><svg class="i"><use href="#cpt"/></svg>坐标</span>
        </div></div>

        <div class="lower">
          <div class="strip"><svg class="strip-ic" viewBox="0 0 12 12"><rect width="12" height="12" fill="#777"/><path d="M2 2l8 8M10 2l-8 8" stroke="#ddd"/></svg></div>
          <div class="lower-main">
            <div class="gridbar">
              <svg class="i"><use href="#gfst"/></svg><svg class="i m7"><use href="#gprv"/></svg><svg class="i m7"><use href="#gnxt"/></svg><svg class="i m7"><use href="#glst"/></svg><span class="sep m5"></span>
              <svg class="i m5"><use href="#gup"/></svg><svg class="i m7"><use href="#gdn"/></svg><span class="sep m7"></span>
              <span class="tool off m5"><svg class="i"><use href="#gins"/></svg>插入</span>
              <span class="tool off"><svg class="i"><use href="#gdel"/></svg>删除</span>
              <span class="tool off"><svg class="i"><use href="#gscl"/></svg>缩尺配筋</span>
              <span class="tool off"><svg class="i"><use href="#ginf"/></svg>钢筋信息</span>
              <span class="tool off"><svg class="i"><use href="#glib"/></svg>钢筋图库</span>
              <span class="tool"><svg class="i"><use href="#goth"/></svg>其他</span><i class="caret m3"></i>
              <span class="closebtn">关闭</span><span class="sep m5"></span>
              <span class="total">单构件钢筋总重(kg)：0</span>
            </div>
            <div class="sheet">
              <div class="sh-row sh-head">
                <div></div><div>筋号</div><div class="sel">直径<small>(mm)</small></div><div>级别</div><div>图号</div><div>图形</div><div>计算公式</div><div>公式描述</div><div>长度<small>(mm)</small></div><div>根数</div><div>搭接</div><div>损耗<small>(%)</small></div><div>单重<small>(kg)</small></div><div>总重<small>(kg)</small></div><div>钢</div>
              </div>
              <div class="sh-row sh-body">
                <div class="rowno">1*</div><div></div><div class="cur"></div><div></div><div></div><div></div><div></div><div></div><div></div><div></div><div></div><div></div><div></div><div></div><div></div>
              </div>
              <div class="sh-fill"></div>
              <div class="hbar"><span class="ha">‹</span><span class="thumb"></span><span class="track"></span><span class="ha">›</span></div>
            </div>
          </div>
        </div>
      </section>
    </div>

    <footer class="status">
      <span class="st st1"><span class="mn">=684 Y=10343</span></span>
      <span class="st st2">层高<span class="mn">:4.5m</span></span>
      <span class="st st3">底标高<span class="mn">:-0.03m</span></span>
      <span class="st st4"><span class="mn">0</span></span>
      <span class="st st5">按鼠标左键指定第一个角点，或拾取构件图元</span>
      <span class="st st6"><span class="mn">367.4 FPS</span></span>
    </footer>
  </div>
</main>

<footer class="taskbar">
  <div class="start"><svg viewBox="0 0 16 16" class="win"><path d="M0 2.200l7-1V7.500H0zM8 1l8-1v7.500H8zM0 8.500h7v6.300l-7-1zM8 8.500h8V16l-8-1.100z" fill="#fff"/></svg></div>
  <div class="search"><span class="cortana"></span><span class="s-text">有问题尽管问我</span><svg class="mic" viewBox="0 0 12 18"><rect x="3.500" y="1" width="5" height="10" rx="2.500" fill="none" stroke="#999"/><path d="M1 8a5 5 0 0 0 10 0M6 13v3M3 17h6" stroke="#999" fill="none"/></svg></div>
  <div class="tile"><svg viewBox="0 0 24 24"><path d="M12 12C4 10 2 6 4 3s8-2 8 9zM12 12c8-2 10-6 8-9s-8-2-8 9zM12 12c-8 2-10 6-8 9s8 2 8-9zM12 12c8 2 10 6 8 9s-8 2-8-9z" fill="#eee"/></svg></div>
  <div class="tile"><svg viewBox="0 0 24 24"><path d="M19 5a9 9 0 1 0 2 9c-1 4-8 4-8 0s4-5 5-3" fill="none" stroke="#ccc" stroke-width="1.200"/><path d="M16 3c-6 0-10 4-9 9" fill="none" stroke="#ccc"/></svg></div>
  <div class="tile"><svg viewBox="0 0 24 24"><path d="M2 13C2 6 6 2 13 2c6 0 9 4 9 10v2H8c0 5 8 6 13 3v5c-7 3-19 2-19-9zM8 9h8c0-4-7-4-8 0z" fill="#0b78d7"/></svg></div>
  <div class="tile"><svg viewBox="0 0 24 24"><path d="M2 3h8l2 3h10v16H2z" fill="#f6d35f"/><path d="M2 10h20v12H2z" fill="#fbe48b"/><rect x="8" y="14" width="8" height="8" fill="#2f9be0"/><rect x="10" y="18" width="4" height="4" fill="#fbe48b"/></svg></div>
  <div class="tile"><svg viewBox="0 0 24 24"><path d="M3 7h18v16H3z" fill="#fff"/><path d="M8 7V3q4-3 8 0v4" fill="none" stroke="#fff" stroke-width="1.500"/><path d="M8 11h3.500v3.500H8zM12.500 11H16v3.500h-3.500zM8 15.500h3.500V19H8zM12.500 15.500H16V19h-3.500z" fill="#000"/></svg></div>
  <div class="tile run"><svg viewBox="0 0 24 24"><rect width="24" height="24" rx="3" fill="#0b8ef0"/><path d="M12 4v15M12 19c-3 0-5-2-5-5M12 19c3 0 5-2 5-5M5 11h14M9 6l3-3 3 3" fill="none" stroke="#fff" stroke-width="1.800"/></svg></div>
  <div class="tile run act"><svg viewBox="0 0 24 24"><rect width="24" height="24" rx="2" fill="#f2c230"/><rect y="13" width="8" height="11" fill="#e2573a"/><rect x="16" y="0" width="8" height="13" fill="#59b44a"/><rect x="16" y="13" width="8" height="11" fill="#2aa1d8"/><rect x="5" y="4" width="14" height="16" fill="#fff"/><path d="M7 8h10M7 11h10M7 14h10M7 17h10" stroke="#d77"/></svg></div>
  <div class="tile run"><svg viewBox="0 0 24 24"><rect width="24" height="24" rx="2" fill="#ef9d22"/><path d="M5 6l12-2 2 15-12 2z" fill="#fff6dd"/><path d="M8 9l7-1M8 12l7-1M8 15l5-1" stroke="#a86"/><path d="M15 16l6-14 2 1-6 14z" fill="#c33"/></svg></div>
  <div class="tile run"><svg viewBox="0 0 24 24"><circle cx="12" cy="12" r="11" fill="#6fc02e"/><circle cx="12" cy="12" r="8" fill="#a5dd55"/><path d="M6 11h12M6 14h12M8 8q4-4 8 0" stroke="#fff" stroke-width="1.600" fill="none"/><path d="M18 1l3 2" stroke="#2a7a1a" stroke-width="2"/></svg></div>
  <div class="tray">
    <div class="cpu"><span>4%</span><span>CPU使用</span></div>
    <svg class="ti" viewBox="0 0 24 24"><path d="M7 14l5-5 5 5" fill="none" stroke="#fff" stroke-width="1.500"/></svg>
    <svg class="ti" viewBox="0 0 24 24"><path d="M7 8h12v8H7z" fill="none" stroke="#fff" stroke-width="1.200"/><path d="M9 10h5v4H9zM3 6h3v4H3z" fill="#fff"/><path d="M4 10v3h3" stroke="#fff" fill="none"/></svg>
    <svg class="ti" viewBox="0 0 24 24"><path d="M6 18a12 12 0 0 1 12-12M9 18a9 9 0 0 1 9-9M12 18a6 6 0 0 1 6-6" fill="none" stroke="#ddd" stroke-dasharray="2 1"/><circle cx="17" cy="17" r="1.500" fill="#fff"/></svg>
    <svg class="ti" viewBox="0 0 24 24"><path d="M6 10h3l4-4v12l-4-4H6z" fill="none" stroke="#fff"/><path d="M15 9q2 3 0 6M17 7q3 5 0 10" fill="none" stroke="#bbb"/></svg>
    <span class="ime">中</span>
    <svg class="ti sg" viewBox="0 0 24 24"><rect x="4" y="4" width="16" height="16" rx="2" fill="#ef4a23" transform="rotate(-8 12 12)"/><path d="M16 8q-6-2-7 1t3 3 3 3-7 1" fill="none" stroke="#fff" stroke-width="2"/></svg>
    <div class="clock"><span>22:14</span><span>2017/2/18</span></div>
    <div class="notif"><svg viewBox="0 0 18 18"><path d="M1 1h16v12H8l-3 3v-3H1z" fill="#fff"/><path d="M4 4h10M4 7h10M4 10h10" stroke="#000"/></svg><b>1</b></div>
  </div>
</footer>

<div class="menu">
  <ul>
    <li><svg class="mi"><use href="#m1"/></svg>切换楼层(H)...</li>
    <li><svg class="mi"><use href="#m2"/></svg><span class="mt">下一楼层(B)</span><span>Ctrl+-</span></li>
    <li class="sepb"><svg class="mi"><use href="#m3"/></svg><span class="mt">上一楼层(A)</span><span>Ctrl+=</span></li>
    <li><svg class="mi"><use href="#m4"/></svg>删除当前楼层构件图元(E)</li>
    <li><svg class="mi"><use href="#m5"/></svg>从其它楼层复制构件图元(O)...</li>
    <li><svg class="mi"><use href="#m6"/></svg>复制选定图元到其它楼层(F)...</li>
    <li class="sepb"><svg class="mi"><use href="#m7"/></svg>修改楼层构件名称(G)...</li>
    <li><svg class="mi"><use href="#b1"/></svg>块复制(Y)</li>
    <li><svg class="mi"><use href="#b2"/></svg>块移动(V)</li>
    <li><svg class="mi"><use href="#b3"/></svg>块旋转(R)</li>
    <li><svg class="mi"><use href="#b4"/></svg>块镜像(M)</li>
    <li><svg class="mi"><use href="#b5"/></svg>块拉伸(X)</li>
    <li><svg class="mi"><use href="#b6"/></svg>块删除(D)</li>
    <li><svg class="mi"><use href="#b7"/></svg>块存盘(S)</li>
    <li><svg class="mi"><use href="#b8"/></svg>块提取(L)</li>
    <li class="sepb"><svg class="mi"><use href="#b9"/></svg>自动拆分标准层</li>
    <li><svg class="mi"><use href="#e1"/></svg>图元存盘(T)</li>
    <li><svg class="mi"><use href="#e2"/></svg>图元提取(U)</li>
  </ul>
</div>

<div class="ime-bar">
  <svg class="sg-logo" viewBox="0 0 28 20"><path d="M3 0h22l3 10q-3 10-14 10T0 10z" fill="#ef5a1e"/><path d="M21 6q-9-3-12 0t5 4 5 3-10 1" fill="none" stroke="#fff" stroke-width="3.500"/></svg>
  <span class="ime-z">中</span>
  <svg class="ib" viewBox="0 0 14 14"><path d="M9 1a6 6 0 1 0 4 9 6 6 0 0 1-4-9z" fill="#1f78d8"/></svg>
  <span class="ime-d">°,</span>
  <svg class="ib" viewBox="0 0 14 16"><rect x="4" y="0" width="6" height="10" rx="3" fill="#1f78d8"/><path d="M1 7a6 6 0 0 0 12 0M7 13v3" stroke="#1f78d8" fill="none"/></svg>
  <svg class="ib kb" viewBox="0 0 16 12"><rect x=".5" y=".5" width="15" height="11" rx="1" fill="none" stroke="#1f78d8"/><path d="M2 3.500h12M2 6h12" stroke="#1f78d8" stroke-dasharray="1 1"/><path d="M4 9h8" stroke="#1f78d8"/></svg>
  <svg class="ib" viewBox="0 0 16 14"><circle cx="6" cy="3" r="3" fill="#a8bccf"/><path d="M0 14q0-7 6-7t6 7z" fill="#a8bccf"/><rect x="8" y="8" width="8" height="6" rx="1" fill="#c8d4df"/></svg>
  <svg class="ib" viewBox="0 0 16 14"><path d="M5 0l3 2 3-2 5 3-2 3-2-1v9H4V5L2 6 0 3z" fill="#1f78d8"/></svg>
  <svg class="ib" viewBox="0 0 16 16"><path d="M1 15l7-8q-1-6 5-6l-2 3 2 2 3-2q0 6-6 5l-7 8z" fill="#1f78d8"/></svg>
</div>

<div class="poi"><span>Poi...</span></div>
<button class="start-btn">开始</button>

<div class="badge">62</div>

<div class="nav nav-l"><svg viewBox="0 0 40 40"><path d="M22 7L5 20l17 13z" fill="rgba(228,228,228,.8)"/><path d="M16 15h18v10H16z" fill="rgba(228,228,228,.8)"/></svg></div>
<div class="nav nav-r"><svg viewBox="0 0 40 40"><path d="M3 20h30M21 7l14 13-14 13" fill="none" stroke="#9c9c9c" stroke-width="8" stroke-linecap="round" stroke-linejoin="round"/></svg></div>

<svg class="marks" viewBox="0 0 1366 768" aria-hidden="true">
  <rect x="112.500" y="36.500" width="53" height="23" fill="none" stroke="#f00" stroke-width="3"/>
  <rect x="117.500" y="171.500" width="177" height="29" fill="none" stroke="#f00" stroke-width="3"/>
  <path d="M129 61l2 40 1 46" fill="none" stroke="#f00" stroke-width="3"/>
  <path d="M127 145h9l-4 12z" fill="#f00"/>
</svg>
</body>
</html>
```

FILE: styles.css
```css
* { box-sizing: border-box; }
html, body { margin: 0; padding: 0; }
body {
  width: 1366px; height: 768px; overflow: hidden; position: relative;
  display: flex; flex-direction: column; background: #f0f0f0;
  font: 11.6px/1 "Noto Sans CJK SC", "Liberation Sans", sans-serif; color: #3c3c3c;
}
ul { list-style: none; margin: 0; padding: 0; }
.defs { position: absolute; width: 0; height: 0; }
.mn { font-family: "Liberation Mono", monospace; font-size: 12px; letter-spacing: -1.2px; }

/* title bar */
.titlebar { height: 29px; flex: none; background: #4a7bd1; display: flex; align-items: center; color: #fff; position: relative; }
.ttl-logo { width: 14px; height: 16px; margin-left: 9px; }
.ttl-text { margin-left: 6px; font: 12px/1 "Liberation Mono", monospace; letter-spacing: -1.2px; white-space: pre; }
.ttl-text b { font: 400 12px/1 "Noto Sans CJK SC", sans-serif; letter-spacing: 0; }
.win-btns { margin-left: auto; display: flex; align-items: center; }
.wb-drop { width: 0; height: 0; border: 5px solid transparent; border-top: 6px solid #fff; margin: 5px 20px 0 0; }
.wb { width: 12px; height: 12px; }
.wb-full { margin-right: 18px; }
.wb-min { margin-right: 17px; }
.wb-res { margin-right: 22px; }
.wb-close { margin-right: 16px; }

/* stage */
.stage { flex: 1; min-height: 0; padding: 4px 22px 6px 21px; background: linear-gradient(#c8c8c8 0, #d8d8d8 3px, #f0f0f0 4px); }
.app { height: 689px; background: #f0f0f0; display: flex; flex-direction: column; box-shadow: 2px 1px 3px rgba(0,0,0,.25); filter: blur(.3px); }

.menubar { height: 30px; flex: none; display: flex; align-items: center; gap: 10.600px; white-space: nowrap; background: #f2f2f2; }
.tool.tnew { margin-left: 0; }
.inputting { margin-left: 146px; color: #4a6a2a; }
.phone { margin-left: 24px; font-size: 12.300px; }
.phone-c { margin-left: -2px; }
.beans { margin-left: 0; font-size: 12px; }
.bell { width: 12px; height: 14px; }
.more { font-weight: 700; color: #222; font-size: 12px; }
.more-top { margin-left: 41px; margin-top: -8px; }
.more-1 { margin-left: 36px; margin-top: -8px; width: 8px; }

.row { height: 28px; flex: none; display: flex; }
.row5 { justify-content: flex-end; padding-right: 2px; }
.band { display: flex; align-items: center; height: 28px; background: #f7f7f7; white-space: nowrap; width: fit-content; }
.band1 { width: 100%; background: #f5f5f5; }
.r2 { padding-right: 4px; }

.i { width: 16px; height: 16px; flex: none; }
.tool { display: inline-flex; align-items: center; gap: 4px; margin-left: 7px; height: 24px; flex: none; }
.tool.off { color: #a8a8a8; }
.sep { width: 1px; height: 18px; background: #cfcfcf; margin-left: 6px; flex: none; }
.sep + .tool { margin-left: 6px; }
.caret { display: block; width: 0; height: 0; border: 3px solid transparent; border-top: 3.500px solid #222; border-bottom: 0; flex: none; margin-left: 5px; }
.grip { width: 3px; height: 20px; background-image: radial-gradient(#999 45%, transparent 50%); background-size: 3px 4px; flex: none; }
.field { background: #fff; height: 24px; display: flex; align-items: center; padding-left: 2px; flex: none; margin-left: 5px; font-size: 12px; }
.f56 { width: 56px; }
.f57 { width: 57px; }
.f55 { width: 55px; margin-left: 6px; }
.f43 { width: 43px; }
.f45 { width: 45px; margin-left: 2px; }
.m0.tool { margin-left: 0; }
.m1 { margin-left: 1px; }
.m2.tool, .m2 { margin-left: 2px; }
.m3.tool, .m3 { margin-left: 3px; }
.m4.tool, .m4 { margin-left: 4px; }
.m5.tool, .m5 { margin-left: 5px; }
.m6.tool, .m6 { margin-left: 6px; }
.m7 { margin-left: 7px; }
.m8.tool, .m8 { margin-left: 8px; }
.m9 { margin-left: 9px; }
.m10 { margin-left: 10px; }
.on { background: #e0edf9; box-shadow: inset 0 0 0 1px #3a8cc7; padding-left: 4px; }
.b-edit { width: 73px; }
.b72 { width: 73px; }
.b49 { width: 49px; padding-left: 2px; gap: 3px; }

.i-a { margin-left: -2px; }
.i-b { margin-left: 5px; }
.c-b { margin-left: 3px; }
.i-c { margin-left: 10px; }
.s-a { margin-right: 218px; }
.hidden-txt { margin-left: 0; }
.combo { display: flex; align-items: center; width: 48px; height: 26px; margin-left: 6px; padding-left: 4px; gap: 3px; background: #fff; flex: none; }
.c-2d { margin-left: 4px; margin-right: 3px; }

.body { flex: 1; min-height: 0; display: flex; }

/* sidebar */
.side { width: 244px; flex: none; display: flex; flex-direction: column; border-right: 2px solid #a8a8a8; background: #fff; }
.side-title { height: 17px; margin-top: 1px; background: #0a78e0; color: #fff; padding: 2px 0 0 0; font-size: 12px; text-indent: -5px; overflow: hidden; flex: none; }
.side-sub { height: 22px; background: #f0f0f0; border-bottom: 1px solid #d0d0d0; flex: none; }
.side-sub2 { height: 22px; background: #f6f6f6; border-bottom: 1px solid #e0e0e0; flex: none; }
.side-tree { flex: 1; min-height: 0; border-bottom: 2px solid #a8a8a8; position: relative; }
.tree-tools { height: 29px; display: flex; align-items: flex-start; padding: 7px 0 0 1px; gap: 5px; }
.tt { width: 16px; height: 12px; }
.tree { font-size: 12px; color: #333; }
.tree li { height: 15.600px; display: flex; align-items: center; white-space: nowrap; position: relative; }
.i16 { width: 15px; height: 15px; flex: none; margin-right: 4px; }
.f { padding-left: 18px; }
.f::before { content: ""; position: absolute; left: 5px; top: 4px; width: 5px; height: 5px; border: solid #999; border-width: 1.500px 1.500px 0 0; transform: rotate(45deg); }
.f.open::before { left: 5px; top: 3px; transform: rotate(135deg); border-color: #333; }
.f::after { content: ""; position: absolute; left: 12px; top: 8px; width: 6px; border-top: 1px dotted #aaa; }
.l { padding-left: 38px; }
.l::before { content: ""; position: absolute; left: 8px; top: 0; height: 100%; border-left: 1px dotted #888; }
.l::after { content: ""; position: absolute; left: 9px; top: 8px; width: 28px; border-top: 1px dotted #888; }
.l.end::before { height: 50%; }
.bk { margin: 0 0 0 -1px; }
.bk2 { margin-left: 5px; }
.newtag { font: 700 9px/1 "Liberation Sans", sans-serif; background: #ffe83a; color: #333; padding: 0 1px; transform: translateY(-5px); }
.side-tab { height: 22px; flex: none; background: #f0f0f0; border-bottom: 1px solid #a8a8a8; display: flex; align-items: center; justify-content: center; color: #333; font-size: 12px; }

/* work area */
.work { flex: 1; min-width: 0; display: flex; flex-direction: column; background: #f0f0f0; }
.s331 { margin-left: 66px; }
.c326 { margin-left: 61px; }
.c331 { margin-left: 66px; }
.c-end { margin-right: 7px; }
.g-end { margin-right: 24px; }
.lbl { color: #8a8a8a; font-size: 12px; flex: none; }
.num { display: flex; align-items: center; justify-content: flex-end; height: 23px; border: 1px solid #9a9a9a; background: #f4f4f4; color: #9a9a9a; font-size: 12px; padding-right: 15px; position: relative; flex: none; }
.n56 { width: 56px; }
.n65 { width: 65px; margin-left: 5px; }
.spin { position: absolute; right: 3px; top: 3px; width: 7px; height: 15px; }
.spin::before, .spin::after { content: ""; position: absolute; left: 0; width: 0; height: 0; border: 3px solid transparent; }
.spin::before { top: 0; border-bottom: 3px solid #444; border-top: 0; }
.spin::after { bottom: 0; border-top: 3px solid #444; border-bottom: 0; }
.chk { width: 11px; height: 11px; border: 1px solid #999; background: #fff; margin-left: 4px; flex: none; }
.rlabel { margin-left: 8px; font-size: 11.600px; }
.deg { margin-left: 4px; margin-right: 2px; font-size: 12px; color: #666; }
.row5 .band { padding-left: 2px; }

.canvas-wrap { height: 270px; margin-top: 1px; display: flex; flex: none; }
.cv-edge { width: 7px; background: #f0f0f0; flex: none; }
.cad { width: 1072px; height: 270px; display: block; flex: none; }
.cad-t text { font: 13px "Liberation Sans", sans-serif; fill: #c6c6c6; text-anchor: middle; }
.cad-t .dk { fill: #8f8f9a; }

.snap { height: 26px; margin-top: 1px; }
.snap .band { height: 26px; background: #f7f7f7; }
.g-s { margin-left: 9px; }
.r6 { padding-right: 3px; }

.lower { flex: 1; min-height: 0; display: flex; }
.strip { width: 18px; flex: none; padding: 4px 0 0 5px; background-image: radial-gradient(#ccc 40%, transparent 45%); background-size: 4px 4px; background-position: 5px 20px; background-repeat: repeat; }
.strip-ic { width: 11px; height: 11px; display: block; }
.lower-main { flex: 1; min-width: 0; display: flex; flex-direction: column; }
.gridbar { height: 31px; flex: none; display: flex; align-items: center; padding-left: 0; background: #f0f0f0; white-space: nowrap; }
.closebtn { margin-left: 8px; font-size: 12px; }
.total { margin-left: 8px; font-size: 12px; }

.sheet { flex: 1; min-height: 0; display: flex; flex-direction: column; border: 1px solid #c4c4c4; background: #fff; width: 1060px; }
.sh-row { display: grid; grid-template-columns: 33px 70px 55px 36px 31px 196px 162px 152px 59px 38px 37px 48px 59px 60px 23px; flex: none; }
.sh-head { height: 20px; background: #f0f0f0; }
.sh-head div { display: flex; align-items: center; justify-content: center; border-right: 1px solid #d8d8d8; border-bottom: 1px solid #d8d8d8; background: linear-gradient(#f9f9f9, #ececec); font-size: 12px; white-space: nowrap; overflow: hidden; }
.sh-head small { font: 9px "Liberation Mono", monospace; }
.sh-head .sel { background: #f8c67a; color: #b03a2a; }
.sh-body { height: 18px; border-bottom: 1px solid #c8c8c8; }
.sh-body div { border-right: 1px solid #d8d8d8; }
.sh-body .rowno { background: #fbd394; color: #a04a2a; display: flex; align-items: center; justify-content: center; font: 11px "Liberation Mono", monospace; }
.sh-body .cur { background: #cfe3f6; border-left: 2px solid #333; }
.sh-fill { flex: 1; }
.hbar { height: 16px; display: flex; align-items: center; background: #f0f0f0; flex: none; }
.ha { width: 17px; height: 16px; display: flex; align-items: center; justify-content: center; font: 700 14px/1 "Liberation Sans", sans-serif; color: #333; flex: none; }
.thumb { width: 682px; height: 15px; background: #cdcdcd; flex: none; }
.track { flex: 1; }

.status { height: 23px; flex: none; display: flex; align-items: center; gap: 3px; background: #f4f4f4; border-top: 2px solid #f0f0f0; border-bottom: 2px solid #222; font-size: 12px; }
.st { height: 19px; display: flex; align-items: center; background: #fafafa; padding-left: 2px; flex: none; white-space: nowrap; }
.st1 { width: 137px; padding-left: 0; }
.st2 { width: 75px; }
.st3 { width: 95px; }
.st4 { width: 43px; }
.st5 { width: 889px; }
.st6 { width: 70px; }

/* taskbar */
.taskbar { height: 40px; flex: none; background: #000; display: flex; align-items: center; color: #fff; }
.start { width: 48px; height: 40px; flex: none; display: flex; align-items: center; justify-content: center; }
.win { width: 16px; height: 16px; }
.search { width: 344px; height: 40px; flex: none; background: #333; display: flex; align-items: center; color: #999; font-size: 14px; padding-left: 9px; }
.cortana { width: 21px; height: 21px; border: 3px solid #e6e6e6; border-radius: 50%; flex: none; }
.s-text { margin-left: 6px; }
.mic { width: 12px; height: 18px; margin-left: auto; margin-right: 14px; }
.tile { width: 49.600px; height: 40px; flex: none; display: flex; align-items: center; justify-content: center; position: relative; }
.tile svg { width: 24px; height: 24px; }
.tile:first-of-type { margin-left: 1px; }
.run::after { content: ""; position: absolute; left: 5px; right: 5px; bottom: 0; height: 2px; background: #76b9ed; }
.act { background: #333; }
.tray { margin-left: auto; display: flex; align-items: center; height: 40px; padding-right: 12px; }
.cpu { width: 70px; display: flex; flex-direction: column; align-items: center; gap: 5px; font: 12px/1 "Noto Sans CJK SC", sans-serif; margin-right: 3px; }
.ti { width: 24px; height: 24px; flex: none; }
.ime { width: 24px; text-align: center; font-size: 14px; flex: none; }
.sg { margin-left: 4px; }
.clock { width: 72px; margin-left: 6px; display: flex; flex-direction: column; align-items: center; gap: 5px; font-size: 12.500px; }
.notif { width: 42px; position: relative; display: flex; justify-content: center; }
.notif svg { width: 18px; height: 18px; }
.notif b { position: absolute; left: 22px; top: 8px; width: 16px; height: 16px; border-radius: 50%; background: #333; border: 1px solid #888; font: 700 11px/14px "Liberation Sans", sans-serif; text-align: center; }

/* floating items */
.menu { position: absolute; left: 111px; top: 59px; width: 214px; height: 415px; padding-top: 1px; background: linear-gradient(90deg, #f5f5f5 25px, #fff 25px); border: 1px solid #b8b8b8; box-shadow: 2px 2px 3px rgba(0,0,0,.35); color: #3a3a3a; font-size: 11.600px; filter: blur(.3px); }
.menu li { height: 22.330px; display: flex; align-items: center; padding-left: 3px; white-space: nowrap; position: relative; }
.menu .sepb { margin-bottom: 3.200px; }
.menu .sepb::after { content: ""; position: absolute; left: 31px; right: 1px; bottom: -2px; border-top: 1px solid #c8c8c8; }
.mi { width: 18px; height: 18px; margin-right: 10px; flex: none; }
.mt { width: 74px; }

.ime-bar { position: absolute; left: 825px; top: 34px; width: 200px; height: 18px; background: #fff; display: flex; align-items: center; }
.sg-logo { width: 28px; height: 20px; margin-top: -3px; flex: none; }
.ime-z { margin-left: 6px; color: #1f78d8; font: 700 13px/1 "Noto Sans CJK SC", sans-serif; }
.ib { width: 14px; height: 14px; flex: none; margin-left: 9px; }
.ime-d { margin-left: 8px; color: #1f78d8; font: 700 12px/1 "Liberation Sans", sans-serif; width: 8px; }
.kb { width: 16px; }

.poi { position: absolute; left: 1307px; top: 45px; width: 37px; height: 24px; background: linear-gradient(90deg, #fff 30px, #e8e8e8 30px); padding: 6px 0 0 3px; color: #bbb; font: 11px "Liberation Sans", sans-serif; }
.start-btn { position: absolute; left: 1307px; top: 70px; width: 37px; height: 22px; border: 1px solid #8a8a8a; border-right: 0; background: #fff; box-shadow: 0 2px 2px rgba(0,0,0,.35); font: 12px/1 "Noto Sans CJK SC", sans-serif; color: #333; padding: 0 0 0 13px; text-align: left; overflow: hidden; white-space: nowrap; }

.badge { position: absolute; left: 1084px; top: -29px; width: 47px; height: 47px; border-radius: 50%; background: linear-gradient(#5fce5f, #2fae3f); border: 1px solid #d8e8d8; box-shadow: 0 1px 2px rgba(0,0,0,.5); color: #fff; font: 700 12px/1 "Liberation Sans", sans-serif; text-align: center; padding-top: 31px; }

.nav { position: absolute; border-radius: 50%; width: 74px; height: 74px; display: flex; align-items: center; justify-content: center; }
.nav svg { width: 48px; height: 48px; }
.nav-l { left: 20px; top: 343px; border: 3px solid rgba(235,235,235,.65); background: rgba(255,255,255,.22); }
.nav-r { left: 1271px; top: 342px; border: 3px solid rgba(215,215,215,.85); }

.marks { position: absolute; left: 0; top: 0; width: 1366px; height: 768px; pointer-events: none; }
```
